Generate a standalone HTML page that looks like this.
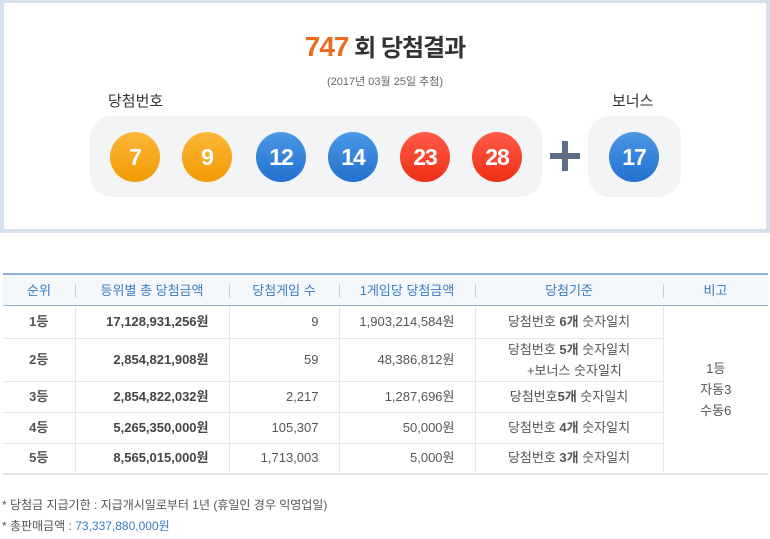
<!DOCTYPE html>
<html><head><meta charset="utf-8"><style>
*{margin:0;padding:0;box-sizing:border-box}
body{width:770px;height:539px;background:#fff;font-family:"Liberation Sans","Noto Sans CJK KR",sans-serif;position:relative;overflow:hidden;color:#555}
.top{position:absolute;left:0;top:0;width:770px;height:233px;border:4px solid #d5e2ee;border-top-width:3px}
.ttl{position:absolute;left:0;width:770px;top:28px;text-align:center;font-size:24px;font-weight:bold;color:#333;letter-spacing:-1px}
.ttl b{color:#ee6a1c;font-size:28px}
.date{position:absolute;left:0;width:770px;top:73px;text-align:center;font-size:11px;color:#666}
.lbl{position:absolute;font-size:15px;color:#333}
.box{position:absolute;background:#f3f4f6;border-radius:22px}
.ball{position:absolute;width:50px;height:50px;border-radius:50%;color:#fff;font-weight:bold;font-size:23px;text-align:center;line-height:50px;letter-spacing:-1px}
.y{background:linear-gradient(#fbb73a,#f29a02)}
.b{background:linear-gradient(#4a98e6,#2370cf)}
.r{background:linear-gradient(#ff5a48,#ee3014)}
.plus{position:absolute;left:550px;top:141px;width:30px;height:30px}
.plus:before{content:"";position:absolute;left:12px;top:0;width:6px;height:30px;background:#5e6d86}
.plus:after{content:"";position:absolute;left:0;top:12px;width:30px;height:6px;background:#5e6d86}
table{position:absolute;left:3px;top:273px;width:765px;border-collapse:collapse;font-size:13px;border-top:2px solid #8fb3d6;border-bottom:2px solid #e2e6ea}
th{height:31px;background:#f5f8fb;color:#3a7cc1;font-weight:normal;border-bottom:1px solid #8fb3d6;position:relative;vertical-align:middle}
th+th:before{content:"";position:absolute;left:0;top:9px;height:14px;border-left:1px solid #bcd0e2}
td{border-bottom:1px solid #e5e7ea;border-left:1px solid #e5e7ea;padding:0 20px 0 8px;color:#555;vertical-align:middle;line-height:20px}
td:first-child{border-left:none;text-align:center;font-weight:bold;padding:0}
.rt{text-align:right}.c{text-align:center;padding:0 8px}.bd{font-weight:bold;color:#444}
.foot{position:absolute;left:2px;font-size:12px;color:#555}
</style></head><body>
<div class="top"></div>
<div class="ttl"><b>747</b> 회 당첨결과</div>
<div class="date">(2017년 03월 25일 추첨)</div>
<div class="lbl" style="left:108px;top:90px">당첨번호</div>
<div class="lbl" style="left:612px;top:90px">보너스</div>
<div class="box" style="left:90px;top:116px;width:452px;height:81px"></div>
<div class="box" style="left:588px;top:116px;width:93px;height:81px"></div>
<div class="ball y" style="left:110px;top:132px">7</div>
<div class="ball y" style="left:182px;top:132px">9</div>
<div class="ball b" style="left:256px;top:132px">12</div>
<div class="ball b" style="left:328px;top:132px">14</div>
<div class="ball r" style="left:400px;top:132px">23</div>
<div class="ball r" style="left:472px;top:132px">28</div>
<div class="plus"></div>
<div class="ball b" style="left:609px;top:132px">17</div>
<table>
<tr><th style="width:72px">순위</th><th style="width:154px">등위별 총 당첨금액</th><th style="width:110px">당첨게임 수</th><th style="width:136px">1게임당 당첨금액</th><th style="width:188px">당첨기준</th><th>비고</th></tr>
<tr style="height:33px"><td>1등</td><td class="rt bd">17,128,931,256원</td><td class="rt">9</td><td class="rt">1,903,214,584원</td><td class="c">당첨번호 <b>6개</b> 숫자일치</td><td class="c" rowspan="5" style="line-height:21px">1등<br>자동3<br>수동6</td></tr>
<tr style="height:42px"><td>2등</td><td class="rt bd">2,854,821,908원</td><td class="rt">59</td><td class="rt">48,386,812원</td><td class="c" style="line-height:21px">당첨번호 <b>5개</b> 숫자일치<br>&nbsp;&nbsp;&nbsp;+보너스 숫자일치</td></tr>
<tr style="height:31px"><td>3등</td><td class="rt bd">2,854,822,032원</td><td class="rt">2,217</td><td class="rt">1,287,696원</td><td class="c">당첨번호<b>5개</b> 숫자일치</td></tr>
<tr style="height:31px"><td>4등</td><td class="rt bd">5,265,350,000원</td><td class="rt">105,307</td><td class="rt">50,000원</td><td class="c">당첨번호 <b>4개</b> 숫자일치</td></tr>
<tr style="height:31px"><td>5등</td><td class="rt bd">8,565,015,000원</td><td class="rt">1,713,003</td><td class="rt">5,000원</td><td class="c">당첨번호 <b>3개</b> 숫자일치</td></tr>
</table>
<div class="foot" style="top:496px">* 당첨금 지급기한 : 지급개시일로부터 1년 (휴일인 경우 익영업일)</div>
<div class="foot" style="top:517px">* 총판매금액 : <span style="color:#3a7cc1">73,337,880,000원</span></div>
</body></html>
